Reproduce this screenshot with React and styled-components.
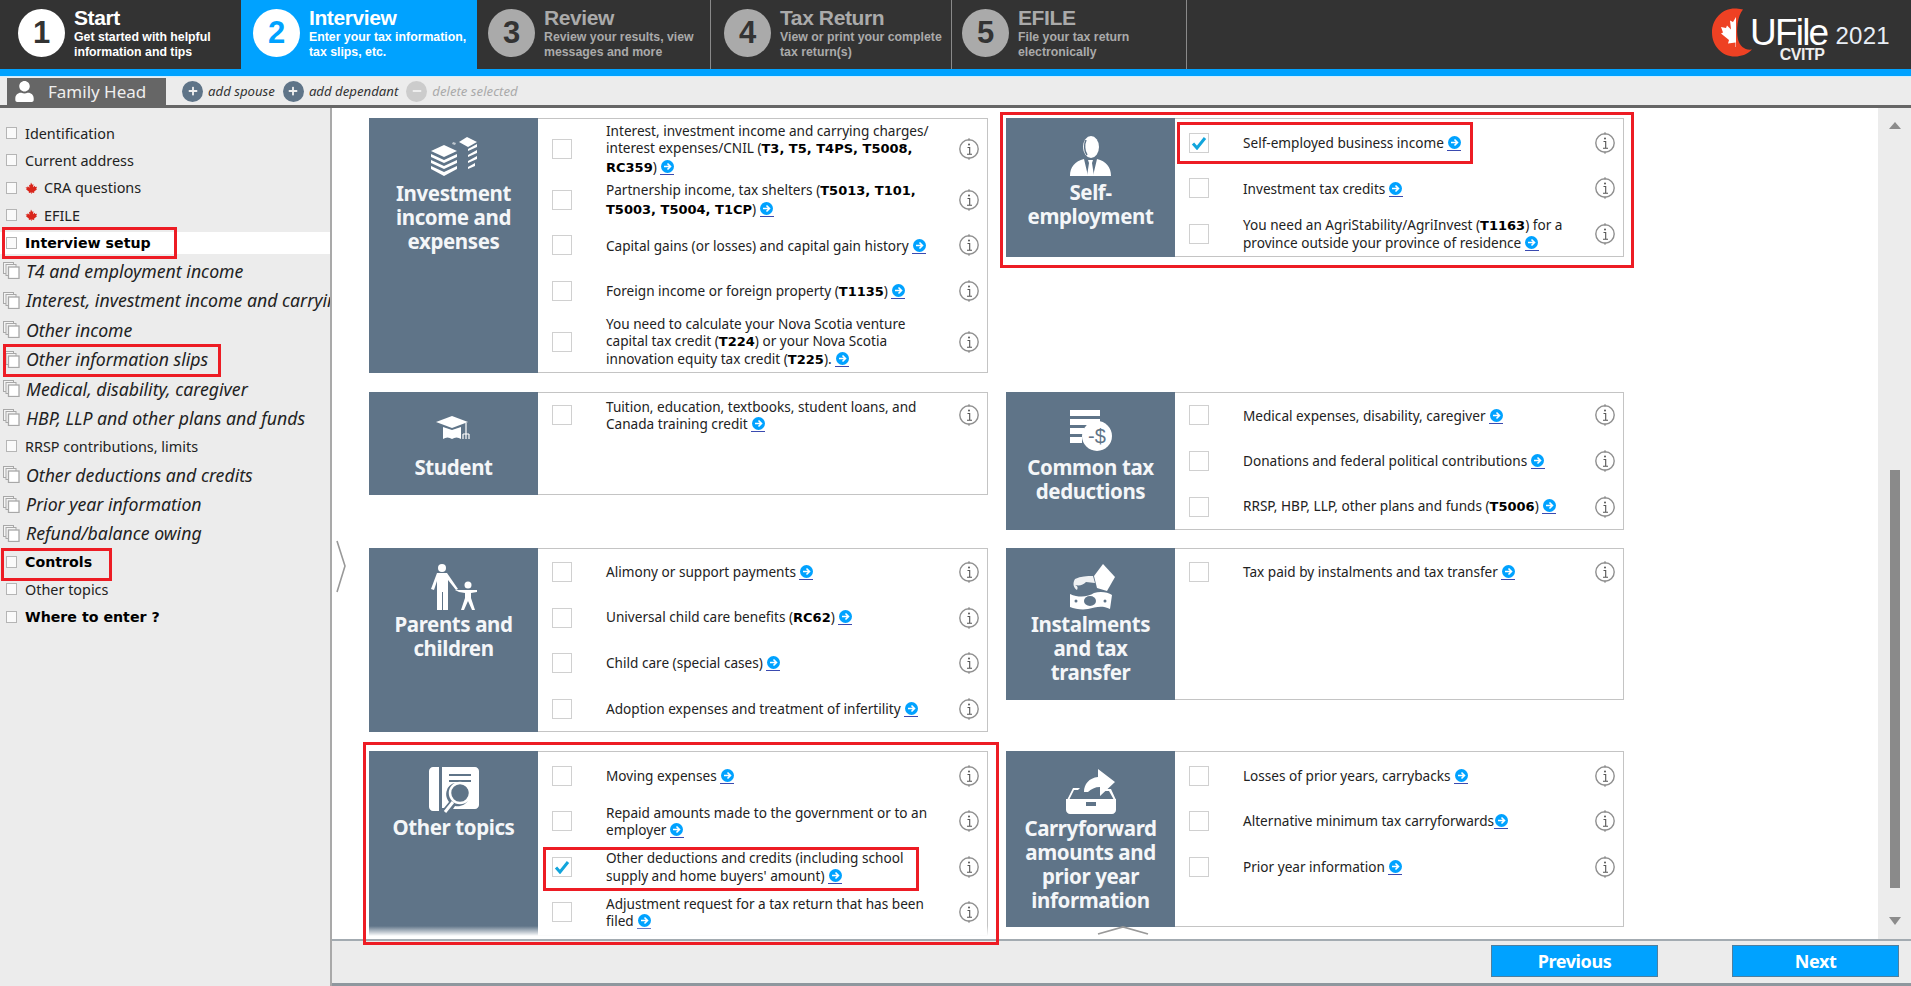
import React from 'react';
import styled, { createGlobalStyle } from 'styled-components';
import { FaUser, FaPlus, FaMinus } from 'react-icons/fa';

const Global = createGlobalStyle`
  html, body { margin: 0; padding: 0; background: #fff; overflow: hidden; }
  * { box-sizing: border-box; }
  body { font-family: "Noto Sans", "DejaVu Sans", sans-serif; color: #222; }
`;

const Shell = styled.div`
  position: relative;
  width: 1911px;
  height: 986px;
  overflow: hidden;
  display: flex;
  flex-direction: column;
`;

/* top step bar */
const Header = styled.header`
  height: 69px;
  background: #333;
  display: flex;
  flex: none;
`;
const Step = styled.div`
  width: ${p => p.$w}px;
  padding-left: ${p => p.$pl}px;
  display: flex;
  align-items: flex-start;
  gap: 9px;
  background: ${p => (p.$active ? '#00a2ff' : 'transparent')};
  border-right: 1px solid ${p => (p.$active || p.$first ? 'transparent' : '#8a8a8a')};
`;
const StepCircle = styled.div`
  width: 47px;
  height: 48px;
  margin-top: 9px;
  flex: none;
  border-radius: 50%;
  display: flex;
  align-items: center;
  justify-content: center;
  font: 700 31px "Liberation Sans", sans-serif;
  background: ${p => (p.$dim ? '#aaa' : '#fff')};
  color: ${p => (p.$active ? '#00a2ff' : '#333')};
`;
const StepText = styled.div`
  padding-top: 5px;
  color: ${p => (p.$dim ? '#aaa' : '#fff')};
`;
const StepTitle = styled.div`
  font: 700 21px/25px "Liberation Sans", sans-serif;
  letter-spacing: -0.4px;
  height: 25px;
`;
const StepSub = styled.div`
  font: 700 12.3px/15px "Liberation Sans", sans-serif;
`;
const Logo = styled.div`
  margin-left: auto;
  display: flex;
  align-items: flex-start;
  padding-right: 21px;
  color: #fff;
`;
const LogoWord = styled.div`
  display: flex;
  flex-direction: column;
  align-items: flex-end;
  margin-left: -5px;
  padding-top: 18px;
`;
const LogoName = styled.div`
  font: 400 37px/29px "Liberation Sans", sans-serif;
  letter-spacing: -1.8px;
`;
const LogoSub = styled.div`
  font: 700 16px/15px "Liberation Sans", sans-serif;
  letter-spacing: -0.5px;
  margin-right: 3px;
  color: #eee;
`;
const LogoYear = styled.div`
  font: 400 24px/28px "Liberation Sans", sans-serif;
  letter-spacing: 0.3px;
  padding: 22px 0 0 8px;
  color: #e8eef6;
`;
const BlueBar = styled.div`
  height: 8px;
  flex: none;
  background: #00a2ff;
  border-bottom: 1px solid #cfeeff;
`;

/* family toolbar */
const Toolbar = styled.div`
  height: 31px;
  flex: none;
  background: #ececec;
  border-bottom: 3px solid #666;
  display: flex;
  align-items: flex-end;
  padding-left: 7px;
`;
const FamilyTab = styled.div`
  width: 159px;
  height: 27px;
  margin-top: 1px;
  background: #666;
  color: #eee;
  display: flex;
  align-items: center;
  padding-left: 7px;
  gap: 13px;
  font-size: 17px;
  svg { font-size: 21px; color: #fff; }
`;
const ToolActions = styled.div`
  display: flex;
  align-items: center;
  height: 28px;
  padding-left: 16px;
`;
const ToolButton = styled.div`
  display: flex;
  align-items: center;
  gap: 5px;
  margin-right: 8px;
  font-size: 13.2px;
  font-style: italic;
  color: ${p => (p.$off ? '#aaa' : '#333')};
`;
const ToolCircle = styled.span`
  width: 21px;
  height: 21px;
  border-radius: 50%;
  display: flex;
  align-items: center;
  justify-content: center;
  color: #eee;
  font-size: 10px;
  background: ${p => (p.$off ? '#ccc' : '#5f7488')};
`;

/* body */
const Body = styled.div`
  flex: 1;
  display: flex;
  min-height: 0;
`;
const Sidebar = styled.nav`
  width: 332px;
  flex: none;
  background: #ececec;
  border-right: 2px solid #a9a9a9;
  padding-top: 14px;
  overflow: hidden;
  display: flex;
  flex-direction: column;
  gap: 5.4px;
`;
const NavRow = styled.div`
  display: flex;
  align-items: center;
  flex: none;
  white-space: nowrap;
  height: ${p => (p.$it ? 24 : 22)}px;
  padding-left: ${p => (p.$it ? 3 : 6)}px;
  background: ${p => (p.$on ? '#fff' : 'transparent')};
  font-family: ${p => (p.$b ? '"DejaVu Sans"' : '"Noto Sans"')}, sans-serif;
  font-size: ${p => (p.$it ? 17.7 : p.$b ? 14.2 : 14.4)}px;
  font-style: ${p => (p.$it ? 'italic' : 'normal')};
  font-weight: ${p => (p.$b ? 700 : 400)};
  color: ${p => (p.$b ? '#000' : '#222')};
`;
const NavBox = styled.span`
  width: 11px;
  height: 12px;
  margin-right: 8px;
  flex: none;
  background: #fafafa;
  border: 1px solid #b5b5b5;
`;
const Leaf = styled.span`
  display: inline-flex;
  margin-right: 7px;
`;
const PagesSvg = styled.svg`
  margin-right: 6px;
  flex: none;
`;

const Right = styled.div`
  flex: 1;
  display: flex;
  flex-direction: column;
  min-width: 0;
`;
const PaneWrap = styled.div`
  flex: 1;
  display: flex;
  min-height: 0;
  position: relative;
`;
const Pane = styled.main`
  flex: 1;
  overflow: hidden;
  padding: 10px 0 0 37px;
  display: grid;
  grid-template-columns: 619px 618px;
  grid-template-rows: 255px 138px 184px 188px;
  column-gap: 18px;
  row-gap: 18.6px;
  align-content: start;
  justify-content: start;
`;
const Handle = styled.svg`
  position: absolute;
  left: 4px;
  top: 432px;
`;
const Scrollbar = styled.div`
  width: 33px;
  flex: none;
  background: #ececec;
  display: flex;
  flex-direction: column;
  align-items: center;
  padding: 14px 0;
`;
const ScrollTrack = styled.div`
  flex: 1;
  width: 10px;
  position: relative;
`;
const ScrollThumb = styled.div`
  position: absolute;
  left: 0;
  right: 0;
  top: 341px;
  bottom: 29px;
  background: #8a8a8a;
`;
const Arrow = styled.div`
  width: 0;
  height: 0;
  border-left: 6px solid transparent;
  border-right: 6px solid transparent;
  ${p => (p.$up ? 'border-bottom: 7px solid #8c8c8c;' : 'border-top: 8px solid #8c8c8c;')}
`;

const Card = styled.section`
  position: relative;
  display: flex;
  align-self: start;
  height: ${p => p.$h}px;
  border: 1px solid #c4c4c4;
  background: #fff;
`;
const Head = styled.div`
  width: 169px;
  flex: none;
  margin: -1px 0 -1px -1px;
  background: #5f7488;
  color: #fff;
  display: flex;
  flex-direction: column;
  align-items: center;
  padding-top: ${p => p.$top}px;
  svg { flex: none; margin-bottom: ${p => p.$gap}px; }
`;
const HeadTitle = styled.div`
  font: 700 20.5px/24px "Noto Sans", sans-serif;
  text-align: center;
  letter-spacing: -0.4px;
  color: #f4f6f8;
`;
const Rows = styled.div`
  flex: 1;
  padding-top: ${p => p.$pad}px;
  min-width: 0;
`;
const Row = styled.div`
  display: flex;
  align-items: center;
  height: ${p => (p.$tall ? 56 : 45.6)}px;
  padding-left: 14px;
`;
const Check = styled.div`
  width: 20px;
  height: 20px;
  flex: none;
  border: 1.5px solid #d0d0d0;
  background: #fff;
  display: flex;
  align-items: center;
  justify-content: center;
`;
const RowText = styled.div`
  flex: 1;
  margin-left: 34px;
  font-size: 13.6px;
  line-height: 17.4px;
  color: #222;
  b { color: #000; font: 700 13px/17.4px "DejaVu Sans", sans-serif; }
`;
const GoLink = styled.span`
  display: inline-flex;
  vertical-align: -1px;
  border-bottom: 1px solid #3a4ab0;
  padding: 0 0.5px 1px;
`;
const Info = styled.svg`
  flex: none;
  margin: 0 8px 0 9px;
`;
const Fade = styled.div`
  position: absolute;
  left: -1px;
  right: -1px;
  bottom: -1px;
  height: 10px;
  background: linear-gradient(rgba(255,255,255,0), #fff);
`;
const Chevron = styled.svg`
  position: absolute;
  left: 90px;
  top: 100%;
`;

const Footer = styled.footer`
  height: 47px;
  flex: none;
  background: #ececec;
  border-top: 2px solid #a3abb1;
  border-bottom: 3px solid #8e979e;
  display: flex;
  justify-content: flex-end;
  gap: 74px;
  padding: 4px 12px 0 0;
`;
const NavButton = styled.button`
  width: 167px;
  height: 32px;
  background: #00a2ff;
  border: 1px solid #4f7f9f;
  color: #fff;
  font: 700 18px "Noto Sans", sans-serif;
  letter-spacing: -0.4px;
`;

/* red annotation boxes lie over the screenshot */
const RedBox = styled.div`
  position: absolute;
  left: ${p => p.$x}px;
  top: ${p => p.$y}px;
  width: ${p => p.$w}px;
  height: ${p => p.$h}px;
  border: 3px solid #ed1c24;
  pointer-events: none;
`;

const MapleLeaf = ({ w = 12, fill = '#d9261c' }) => (
  <svg width={w} height={w} viewBox="0 0 24 24">
    <path fill={fill} d="M12 1l2.500 4.500 2.500-1-1 6 3.500-3 1 2.500 3.500-.5-1.500 4 1.500 1-6 5 .5 2.500-5-.8V24h-1v-2.800l-5 .8.5-2.500-6-5 1.500-1L1 10.500l3.500.5 1-2.500 3.500 3-1-6 2.500 1z" />
  </svg>
);
const LogoMark = () => (
  <svg width="44" height="50" viewBox="0 0 44 50" style={{ marginTop: 8 }}>
    <path fill="#ee4123" d="M32 1.500C28 .5 26 .5 24 .5 11 .5 1 11 1 24.500S11 48.500 24 48.500c6 0 12-2 17-7-7 1-12-3-14-10-2-9-.5-24 5-30z" />
    <path fill="#fff" d="M25 9l-3 5-3-1.500 1 9-4-4-1 2.500-5-1 2 5.500-2 1 8 6.500-1 3.500 7.500-1V39H25z" />
  </svg>
);
const PagesIcon = () => (
  <PagesSvg width="17" height="17" viewBox="0 0 17 17" fill="#f4f4f4" stroke="#a8a8a8" strokeWidth="1">
    <rect x="0.500" y="0.500" width="10" height="11" />
    <rect x="3" y="2.500" width="10" height="11" />
    <rect x="5.500" y="5" width="10.500" height="11.500" fill="#fff" strokeWidth="1.300" />
  </PagesSvg>
);
const GoIcon = () => (
  <svg width="13" height="13" viewBox="0 0 13 13">
    <circle cx="6.500" cy="6.500" r="6.500" fill="#00a2ff" />
    <path d="M3 6.500h6M6.500 3.500l3 3-3 3" fill="none" stroke="#fff" strokeWidth="1.600" />
  </svg>
);
const InfoIcon = () => (
  <Info width="20" height="22" viewBox="0 0 20 22">
    <circle cx="10" cy="11" r="9.200" fill="none" stroke="#8f8f8f" strokeWidth="1.400" />
    <path d="M10 0v3M10 19v3" stroke="#8f8f8f" strokeWidth="1" />
    <path d="M8.500 9.500h2.200v6.500M8 16.300h5" fill="none" stroke="#555" strokeWidth="1.100" />
    <circle cx="10" cy="6.500" r="1" fill="#555" />
  </Info>
);
const Tick = () => (
  <svg width="16" height="14" viewBox="0 0 16 14">
    <path d="M2 7.500l4 4.500 8-10" fill="none" stroke="#12a5dc" strokeWidth="3" />
  </svg>
);

const Icons = {
  money: (
    <svg width="46" height="40" viewBox="0 0 46 40" fill="#fff">
      <path d="M13 8l13 6-13 6L0 14z" />
      <path d="M0 17l13 6 13-6v3l-13 6-13-6zM0 23l13 6 13-6v3l-13 6-13-6zM0 29l13 6 13-6v3l-13 7-13-7z" />
      <path d="M36 0l10 5-9 5-9-5z" />
      <path d="M37 12l9-5v3l-9 4zM37 18l9-5v3l-9 4zM37 24l9-5v3l-9 4zM37 30l7-4v3l-7 3z" />
      <path d="M22 5l3 1-1 2-3-1z" opacity=".6" />
    </svg>
  ),
  person: (
    <svg width="41" height="40" viewBox="0 0 41 40" fill="#fff">
      <ellipse cx="21" cy="11" rx="8" ry="11" />
      <path d="M16 4c-2 4-2 11 1 15" fill="none" stroke="#5f7488" strokeWidth="1.500" />
      <path d="M0 40c0-9 5-15 14-17l4 17zM41 40c0-9-5-15-14-17l-4 17z" />
      <path d="M18 24h5l-1 3 2 13h-7l2-13z" />
    </svg>
  ),
  cap: (
    <svg width="36" height="24" viewBox="0 0 36 24" fill="#fff">
      <path d="M16 0l16 6-16 6L0 6z" />
      <path d="M7 11l9 3 9-3v12c-3-2-6-2-9 0-3-2-6-2-9 0z" />
      <path d="M30 7v9M27 18v5M30 16v7M33 18v5M27 18h6" fill="none" stroke="#fff" strokeWidth="1.200" />
    </svg>
  ),
  taxes: (
    <svg width="42" height="41" viewBox="0 0 42 41" fill="#fff">
      <path d="M0 0h30v6H0zM0 9h30v6H0zM0 18h14v6H0zM0 27h12v6H0z" />
      <circle cx="27" cy="26" r="15" />
      <text x="27" y="33" textAnchor="middle" fontFamily="Liberation Sans" fontSize="20" fill="#5f7488">-$</text>
    </svg>
  ),
  family: (
    <svg width="48" height="46" viewBox="0 0 48 46" fill="#fff">
      <circle cx="12" cy="4" r="4" />
      <path d="M7 9h10l11 16-2 1-8-10v30h-5V28h-1v18H7V17l-3 9-3-1z" />
      <circle cx="38" cy="21" r="3.500" />
      <path d="M25 26h22v2l-6 1v5l4 12h-3l-4-9-4 9h-3l4-12v-5l-6-1z" />
    </svg>
  ),
  instal: (
    <svg width="48" height="46" viewBox="0 0 48 46" fill="#fff">
      <path d="M36 0l12 13-8 14-10-3-3-12z" />
      <path d="M8 15c6-3 12-3 18-3l2 7-9-1c-3 3-6 4-11 3 3 1 3 3 2 5-3-2-5-6-2-11z" opacity=".9" />
      <path d="M3 30c9 4 18 3 24-1 6-2 14-1 18 2l-2 14c-8-4-14-2-22 0-6 1-13 0-18-2z" />
      <ellipse cx="23" cy="37" rx="6" ry="5" fill="#5f7488" />
      <circle cx="9" cy="37" r="1.500" fill="#5f7488" />
      <circle cx="38" cy="37" r="1.500" fill="#5f7488" />
    </svg>
  ),
  topics: (
    <svg width="50" height="48" viewBox="0 0 50 48">
      <path fill="#fff" d="M4 0h6v44H4c-2 0-4-2-4-4V4c0-2 2-4 4-4zM13 0h33c2 0 4 2 4 4v34c0 2-2 4-4 4H24l2-3c5 1 11-1 13-6 3-6 1-13-5-16-7-3-14 0-16 6-2 5 0 9 2 12l-5 6h-2z" />
      <path d="M20 8h22M20 14h22" stroke="#5f7488" strokeWidth="1.800" />
      <circle cx="31" cy="26" r="10" fill="none" stroke="#fff" strokeWidth="2.500" />
      <path d="M24 35l-8 10" stroke="#fff" strokeWidth="3" />
    </svg>
  ),
  box: (
    <svg width="54" height="45" viewBox="0 0 54 45" fill="#fff">
      <path d="M20 26c0-8 5-14 14-15V3l17 13-15 14v-9c-5 0-9 2-12 5z" transform="translate(0 -3)" />
      <path d="M3 31l6-12h7l-2 2h-4l-5 10zM40 20l7 0 5 11h-2l-5-9h-5z" />
      <path d="M2 30h50v11c0 2-2 4-4 4H6c-2 0-4-2-4-4z" />
      <rect x="22" y="33" width="10" height="4" fill="#5f7488" />
    </svg>
  ),
};

const Go = () => <GoLink><GoIcon /></GoLink>;

const Item = ({ tall, on, children }) => (
  <Row $tall={tall}>
    <Check>{on && <Tick />}</Check>
    <RowText>{children}</RowText>
    <InfoIcon />
  </Row>
);

const steps = [
  { n: 1, w: 241, pl: 18, t: 'Start', s: ['Get started with helpful', 'information and tips'], first: true },
  { n: 2, w: 236, pl: 12, t: 'Interview', s: ['Enter your tax information,', 'tax slips, etc.'], active: true },
  { n: 3, w: 234, pl: 11, t: 'Review', s: ['Review your results, view', 'messages and more'], dim: true },
  { n: 4, w: 241, pl: 13, t: 'Tax Return', s: ['View or print your complete', 'tax return(s)'], dim: true },
  { n: 5, w: 235, pl: 10, t: 'EFILE', s: ['File your tax return', 'electronically'], dim: true },
];

const nav = [
  { t: 'Identification' },
  { t: 'Current address' },
  { t: 'CRA questions', leaf: true },
  { t: 'EFILE', leaf: true },
  { t: 'Interview setup', b: true, on: true },
  { t: 'T4 and employment income', it: true },
  { t: 'Interest, investment income and carrying charges', it: true },
  { t: 'Other income', it: true },
  { t: 'Other information slips', it: true },
  { t: 'Medical, disability, caregiver', it: true },
  { t: 'HBP, LLP and other plans and funds', it: true },
  { t: 'RRSP contributions, limits' },
  { t: 'Other deductions and credits', it: true },
  { t: 'Prior year information', it: true },
  { t: 'Refund/balance owing', it: true },
  { t: 'Controls', b: true },
  { t: 'Other topics' },
  { t: 'Where to enter ?', b: true },
];

export default function App() {
  return (
    <Shell>
      <Global />
      <Header>
        {steps.map(s => (
          <Step key={s.n} $w={s.w} $pl={s.pl} $active={s.active} $first={s.first}>
            <StepCircle $dim={s.dim} $active={s.active}>{s.n}</StepCircle>
            <StepText $dim={s.dim}>
              <StepTitle>{s.t}</StepTitle>
              <StepSub>{s.s[0]}<br />{s.s[1]}</StepSub>
            </StepText>
          </Step>
        ))}
        <Logo>
          <LogoMark />
          <LogoWord>
            <LogoName>UFile</LogoName>
            <LogoSub>CVITP</LogoSub>
          </LogoWord>
          <LogoYear>2021</LogoYear>
        </Logo>
      </Header>
      <BlueBar />
      <Toolbar>
        <FamilyTab><FaUser />Family Head</FamilyTab>
        <ToolActions>
          <ToolButton><ToolCircle><FaPlus /></ToolCircle>add spouse</ToolButton>
          <ToolButton><ToolCircle><FaPlus /></ToolCircle>add dependant</ToolButton>
          <ToolButton $off><ToolCircle $off><FaMinus /></ToolCircle>delete selected</ToolButton>
        </ToolActions>
      </Toolbar>
      <Body>
        <Sidebar>
          {nav.map(n => (
            <NavRow key={n.t} $it={n.it} $b={n.b} $on={n.on}>
              {n.it ? <PagesIcon /> : <NavBox />}
              {n.leaf && <Leaf><MapleLeaf /></Leaf>}
              {n.t}
            </NavRow>
          ))}
        </Sidebar>
        <Right>
          <PaneWrap>
            <Pane>
              <Card $h={255}>
                <Head $top={19} $gap={4}>
                  {Icons.money}
                  <HeadTitle>Investment<br />income and<br />expenses</HeadTitle>
                </Head>
                <Rows $pad={2}>
                  <Item tall>Interest, investment income and carrying charges/<br />interest expenses/CNIL (<b>T3, T5, T4PS, T5008,<br />RC359</b>) <Go /></Item>
                  <Item>Partnership income, tax shelters (<b>T5013, T101,<br />T5003, T5004, T1CP</b>) <Go /></Item>
                  <Item>Capital gains (or losses) and capital gain history <Go /></Item>
                  <Item>Foreign income or foreign property (<b>T1135</b>) <Go /></Item>
                  <Item tall>You need to calculate your Nova Scotia venture<br />capital tax credit (<b>T224</b>) or your Nova Scotia<br />innovation equity tax credit (<b>T225</b>). <Go /></Item>
                </Rows>
              </Card>
              <Card $h={139}>
                <Head $top={18} $gap={4}>
                  {Icons.person}
                  <HeadTitle>Self-<br />employment</HeadTitle>
                </Head>
                <Rows $pad={1}>
                  <Item on>Self-employed business income <Go /></Item>
                  <Item>Investment tax credits <Go /></Item>
                  <Item>You need an AgriStability/AgriInvest (<b>T1163</b>) for a<br />province outside your province of residence <Go /></Item>
                </Rows>
              </Card>
              <Card $h={103}>
                <Head $top={24} $gap={15}>
                  {Icons.cap}
                  <HeadTitle>Student</HeadTitle>
                </Head>
                <Rows $pad={0}>
                  <Item>Tuition, education, textbooks, student loans, and<br />Canada training credit <Go /></Item>
                </Rows>
              </Card>
              <Card $h={138}>
                <Head $top={18} $gap={4}>
                  {Icons.taxes}
                  <HeadTitle>Common tax<br />deductions</HeadTitle>
                </Head>
                <Rows $pad={0}>
                  <Item>Medical expenses, disability, caregiver <Go /></Item>
                  <Item>Donations and federal political contributions <Go /></Item>
                  <Item>RRSP, HBP, LLP, other plans and funds (<b>T5006</b>) <Go /></Item>
                </Rows>
              </Card>
              <Card $h={184}>
                <Head $top={16} $gap={2}>
                  {Icons.family}
                  <HeadTitle>Parents and<br />children</HeadTitle>
                </Head>
                <Rows $pad={0}>
                  <Item>Alimony or support payments <Go /></Item>
                  <Item>Universal child care benefits (<b>RC62</b>) <Go /></Item>
                  <Item>Child care (special cases) <Go /></Item>
                  <Item>Adoption expenses and treatment of infertility <Go /></Item>
                </Rows>
              </Card>
              <Card $h={152}>
                <Head $top={16} $gap={2}>
                  {Icons.instal}
                  <HeadTitle>Instalments<br />and tax<br />transfer</HeadTitle>
                </Head>
                <Rows $pad={0}>
                  <Item>Tax paid by instalments and tax transfer <Go /></Item>
                </Rows>
              </Card>
              <Card $h={185}>
                <Head $top={16} $gap={0}>
                  {Icons.topics}
                  <HeadTitle>Other topics</HeadTitle>
                </Head>
                <Rows $pad={1}>
                  <Item>Moving expenses <Go /></Item>
                  <Item>Repaid amounts made to the government or to an<br />employer <Go /></Item>
                  <Item on>Other deductions and credits (including school<br />supply and home buyers' amount) <Go /></Item>
                  <Item>Adjustment request for a tax return that has been<br />filed <Go /></Item>
                </Rows>
                <Fade />
              </Card>
              <Card $h={176}>
                <Head $top={18} $gap={2}>
                  {Icons.box}
                  <HeadTitle>Carryforward<br />amounts and<br />prior year<br />information</HeadTitle>
                </Head>
                <Rows $pad={1}>
                  <Item>Losses of prior years, carrybacks <Go /></Item>
                  <Item>Alternative minimum tax carryforwards<Go /></Item>
                  <Item>Prior year information <Go /></Item>
                </Rows>
                <Chevron width="52" height="9" viewBox="0 0 52 9">
                  <path d="M1 8L26 1l25 7" fill="none" stroke="#999" strokeWidth="1.800" />
                </Chevron>
              </Card>
            </Pane>
            <Handle width="10" height="53" viewBox="0 0 10 53">
              <path d="M1 1l8 25-8 26" fill="none" stroke="#999" strokeWidth="1.600" />
            </Handle>
            <Scrollbar>
              <Arrow $up />
              <ScrollTrack><ScrollThumb /></ScrollTrack>
              <Arrow />
            </Scrollbar>
          </PaneWrap>
          <Footer>
            <NavButton>Previous</NavButton>
            <NavButton>Next</NavButton>
          </Footer>
        </Right>
      </Body>

      <RedBox $x={2} $y={227} $w={175} $h={32} />
      <RedBox $x={3} $y={344} $w={218} $h={33} />
      <RedBox $x={1} $y={548} $w={111} $h={33} />
      <RedBox $x={1000} $y={112} $w={634} $h={156} />
      <RedBox $x={1177} $y={122} $w={296} $h={42} />
      <RedBox $x={363} $y={742} $w={636} $h={203} />
      <RedBox $x={543} $y={847} $w={376} $h={44} />
    </Shell>
  );
}
